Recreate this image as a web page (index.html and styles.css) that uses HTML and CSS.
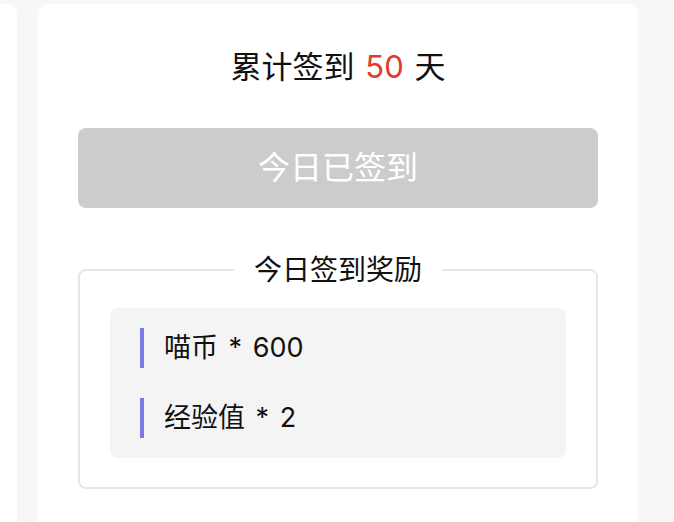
FILE: index.html
```html
<!DOCTYPE html>
<html lang="zh-CN">
<head>
<meta charset="utf-8">
<title>签到</title>
<link rel="stylesheet" href="styles.css">
</head>
<body>
<div class="track">
  <div class="card card-prev"></div>
  <div class="card">
    <div class="title">累计签到 <span class="count">50</span> 天</div>
    <div class="btn">今日已签到</div>
    <fieldset class="reward">
      <legend>今日签到奖励</legend>
      <div class="reward-list">
        <div class="reward-item">喵币 * 600</div>
        <div class="reward-item">经验值 * 2</div>
      </div>
    </fieldset>
  </div>
</div>
</body>
</html>
```

FILE: styles.css
```css
html, body {
  margin: 0;
  padding: 0;
  background: #f7f7f7;
  overflow: hidden;
}
body {
  font-family: "Inter", "Noto Sans CJK SC", sans-serif;
  color: #111;
}
.track {
  display: flex;
  gap: 21px;
  padding-top: 4px;
  height: 518px;
}
.card {
  flex: 0 0 600px;
  background: #fff;
  border-radius: 10px 10px 0 0;
  padding: 43px 40px 0;
  box-sizing: border-box;
}
.card-prev {
  margin-left: -583px;
}
.title {
  text-align: center;
  font-size: 31px;
  line-height: 40px;
  word-spacing: 2px;
}
.count {
  color: #e03a2b;
}
.btn {
  margin-top: 41px;
  height: 80px;
  line-height: 80px;
  background: #cccccc;
  color: #fff;
  border-radius: 8px;
  text-align: center;
  font-size: 32px;
}
.reward {
  margin: 42px 0 0;
  padding: 0 30px 29px;
  border: 2px solid #e6e6e6;
  border-radius: 8px;
  min-width: 0;
}
.reward legend {
  margin: 0 auto;
  padding: 0 20px;
  font-size: 28px;
  line-height: 40px;
}
.reward-list {
  margin-top: 18px;
  background: #f4f4f4;
  border-radius: 8px;
  padding: 20px 30px;
  display: flex;
  flex-direction: column;
  gap: 30px;
}
.reward-item {
  border-left: 4px solid #7b7be6;
  padding-left: 20px;
  font-size: 27px;
  line-height: 40px;
  word-spacing: 3px;
}
```
